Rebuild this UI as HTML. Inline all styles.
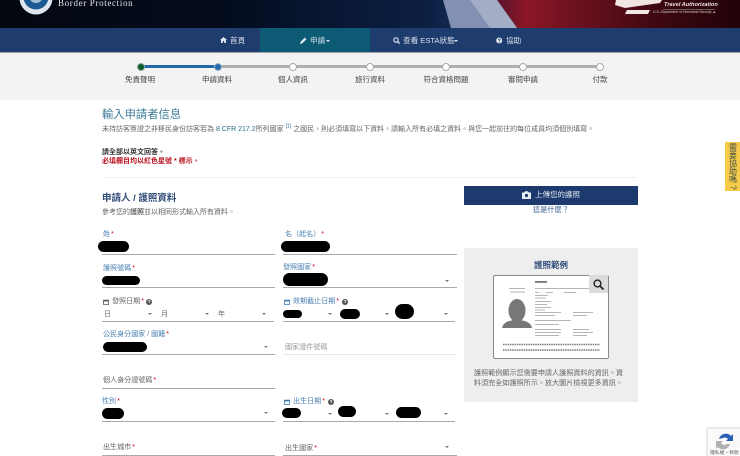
<!DOCTYPE html>
<html lang="zh-Hant"><head><meta charset="utf-8"><title>ESTA</title>
<style>
html,body{margin:0;padding:0;background:#fff}
body{width:740px;height:456px;overflow:hidden;position:relative;font-family:"Liberation Sans","Noto Sans CJK TC",sans-serif;font-size:7.05px;color:#555}
#w{position:absolute;left:0;top:0;width:740px;height:456px;overflow:hidden;filter:blur(.35px)}
#w div,#w svg{position:absolute}
.t{white-space:nowrap;line-height:10px;height:10px}
.c{transform:translateX(-50%)}
.b{background:#000;border-radius:7px}
.u{height:1px;background:#a9a9a9}
.l{color:#4a7fb0}
.g{color:#666}
.r{color:#d0021b;margin-left:1px}
.a{width:0;height:0;border-left:2px solid transparent;border-right:2px solid transparent;border-top:2.5px solid #777}
.s{color:#444;font-size:7.5px}
.d{width:6px;height:6px;border-radius:50%;background:#fff;border:1.5px solid #aaa;top:62.5px}
.nv{color:#d8e0ea;font-size:7.6px}
</style></head><body><div id="w">

<!-- header -->
<div style="left:0;top:0;width:740px;height:28px;background:linear-gradient(90deg,#03070f 0,#040c1e 30%,#0c2044 58%,#13284e 61%,#4a1530 66%,#8a1626 71%,#64101c 80%,#3a0710 90%,#220308 100%)"></div>
<svg style="left:0;top:0" width="740" height="28" viewBox="0 0 740 28">
<polygon points="443,0 497,0 517,28 451,28" fill="#8290b4"/>
<polygon points="470,0 497,0 517,28 490,28" fill="#a4adc6"/>
<circle cx="36" cy="-2" r="16.500" fill="#dfe6ee"/><circle cx="36" cy="-3" r="12.500" fill="#1c5a94"/><circle cx="36" cy="-4" r="7" fill="#9fc0d4"/>
<polygon points="616,0 662,0 660,3 625,8 615,5" fill="#efe6e4"/>
<polygon points="627,10 650,10 648,14 625,14" fill="#f2e8e6"/>
</svg>
<div class="t" style="left:58px;top:-2px;color:#e4e8ee;font:9px/10px 'Liberation Serif',serif;letter-spacing:.65px">Border Protection</div>
<div class="t" style="left:664px;top:0;color:#e8e0e0;font:italic bold 5.6px/10px 'Liberation Sans',sans-serif">Travel Authorization</div>
<div class="t" style="left:653px;top:8px;color:#d8d0d0;font:italic 3.4px/9px 'Liberation Sans',sans-serif">U.S. Department of Homeland Security &#9650;</div>
<div style="left:663px;top:9px;width:52px;height:1px;background:#bda;opacity:.4"></div>

<!-- nav -->
<div style="left:0;top:28px;width:740px;height:24px;background:#1f3c6f"></div>
<div style="left:260px;top:28px;width:110px;height:24px;background:#0d5a74"></div>
<div style="left:0;top:52px;width:740px;height:1px;background:#9aa0a8"></div>
<svg style="left:220px;top:37px" width="7" height="6" viewBox="0 0 7 6"><path d="M3.5 0L7 3H6V6H4.200V4H2.800V6H1V3H0Z" fill="#dfe6ef"/></svg>
<div class="t nv" style="left:230px;top:36px">首頁</div>
<svg style="left:300px;top:37px" width="7" height="7" viewBox="0 0 7 7"><path d="M0 7L.6 4.800 4.800.6 6.400 2.200 2.200 6.400Z" fill="#e6ecf2"/></svg>
<div class="t nv" style="left:310px;top:36px">申請</div>
<div style="left:326px;top:40px;border-left:2px solid transparent;border-right:2px solid transparent;border-top:2px solid #e6ecf2;width:0;height:0"></div>
<svg style="left:393px;top:37px" width="7" height="7" viewBox="0 0 7 7"><circle cx="3" cy="3" r="2.200" fill="none" stroke="#e6ecf2" stroke-width="1.100"/><path d="M4.600 4.600L6.600 6.600" stroke="#e6ecf2" stroke-width="1.200"/></svg>
<div class="t nv" style="left:403px;top:36px">查看 ESTA狀態</div>
<div style="left:454px;top:40px;border-left:2px solid transparent;border-right:2px solid transparent;border-top:2px solid #e6ecf2;width:0;height:0"></div>
<svg style="left:496px;top:37px" width="7" height="7" viewBox="0 0 7 7"><circle cx="3.200" cy="3.500" r="3" fill="#e6ecf2"/><path d="M2.200 2.800C2.400 1.700 4.200 1.800 4.200 2.900 4.200 3.600 3.200 3.600 3.200 4.400" stroke="#1f3c6f" stroke-width=".8" fill="none"/><circle cx="3.200" cy="5.400" r=".5" fill="#1f3c6f"/></svg>
<div class="t nv" style="left:506px;top:36px">協助</div>

<!-- progress -->
<div style="left:0;top:53px;width:740px;height:47px;background:#f3f3f3"></div>
<div style="left:140px;top:65px;width:460px;height:3px;background:#b0b0b0"></div>
<div style="left:140px;top:65px;width:77px;height:3px;background:#2467a8"></div>
<div style="left:137px;top:63px;width:6px;height:6px;border-radius:50%;background:#0f5c2a;border:.5px solid #8aa"></div>
<div style="left:214px;top:63px;width:6px;height:6px;border-radius:50%;background:#2467a8;border:.5px solid #9bc"></div>
<div class="d" style="left:289px"></div><div class="d" style="left:366px"></div><div class="d" style="left:442px"></div><div class="d" style="left:519px"></div><div class="d" style="left:596px"></div>
<div class="t c s" style="left:140px;top:75px">免責聲明</div>
<div class="t c s" style="left:217px;top:75px">申請資料</div>
<div class="t c s" style="left:293px;top:75px">個人資訊</div>
<div class="t c s" style="left:370px;top:75px">旅行資料</div>
<div class="t c s" style="left:446px;top:75px">符合資格問題</div>
<div class="t c s" style="left:523px;top:75px">審閱申請</div>
<div class="t c s" style="left:600px;top:75px">付款</div>

<!-- intro -->
<div class="t" style="left:102px;top:109px;font-size:11.3px;line-height:12px;height:12px;color:#3c7c98">輸入申請者信息</div>
<div class="t" style="left:102px;top:125px;color:#666;font-size:7px">未持訪客簽證之非移民身份訪客若為 <span style="color:#2a6d8e">8 CFR 217.2</span>所列國家 <sup style="font-size:5px;line-height:0;color:#2a6d8e">[1]</sup> 之國民，則必須填寫以下資料。請輸入所有必填之資料。與您一起前往的每位成員均須個別填寫。</div>
<div class="t" style="left:102px;top:148px;color:#333;font-weight:bold;font-size:7px">請全部以英文回答。</div>
<div class="t" style="left:102px;top:157px;font-size:7px;font-weight:bold;color:#b8101e">必填欄目均以紅色星號 * 標示。</div>
<div style="left:102px;top:177px;width:535px;height:1px;background:#f0f0f0"></div>
<div class="t" style="left:102px;top:193px;font-size:9.5px;line-height:12px;height:12px;font-weight:bold;color:#2f4a78">申請人 / 護照資料</div>
<div class="t" style="left:102px;top:208px;color:#666;font-size:7px">參考您的<b>護照</b>並以相同形式輸入所有資料。</div>

<!-- row 1 -->
<div class="t l" style="left:103px;top:230px">姓<span class="r">*</span></div>
<div class="b" style="left:98px;top:241px;width:31px;height:11px"></div>
<div class="u" style="left:102px;top:254px;width:173px"></div>
<div class="t l" style="left:285px;top:230px">名（起名）<span class="r">*</span></div>
<div class="b" style="left:281px;top:241px;width:49px;height:11px"></div>
<div class="u" style="left:283px;top:254px;width:174px"></div>

<!-- row 2 -->
<div class="t l" style="left:103px;top:264px">護照號碼<span class="r">*</span></div>
<div class="b" style="left:102px;top:276px;width:38px;height:9px"></div>
<div class="u" style="left:102px;top:287px;width:173px"></div>
<div class="t l" style="left:283px;top:263px">發照國家<span class="r">*</span></div>
<div class="b" style="left:283px;top:273px;width:45px;height:13px"></div>
<div class="a" style="left:445px;top:280px"></div>
<div class="u" style="left:283px;top:287px;width:174px"></div>

<!-- row 3 -->
<svg style="left:103px;top:299px" width="6" height="6" viewBox="0 0 6 6"><path d="M.5 1.200H5.500V5.500H.5Z" fill="none" stroke="#555" stroke-width=".8"/><path d="M.5 1.200H5.500V2.400H.5Z" fill="#555"/></svg>
<div class="t g" style="left:112px;top:297px">發照日期<span class="r">*</span></div>
<svg style="left:146px;top:299px" width="6" height="6" viewBox="0 0 6 6"><circle cx="3" cy="3" r="3" fill="#555"/><path d="M2 2.300C2.200 1.300 3.900 1.400 3.900 2.400 3.900 3 3 3 3 3.800" stroke="#fff" stroke-width=".7" fill="none"/></svg>
<div class="t g" style="left:104px;top:310px">日</div><div class="a" style="left:148px;top:313px"></div>
<div class="t g" style="left:161px;top:310px">月</div><div class="a" style="left:205px;top:313px"></div>
<div class="t g" style="left:218px;top:310px">年</div><div class="a" style="left:262px;top:313px"></div>
<div class="u" style="left:102px;top:321px;width:172px"></div>

<svg style="left:284px;top:299px" width="6" height="6" viewBox="0 0 6 6"><path d="M.5 1.200H5.500V5.500H.5Z" fill="none" stroke="#3b78b0" stroke-width=".8"/><path d="M.5 1.200H5.500V2.400H.5Z" fill="#3b78b0"/></svg>
<div class="t l" style="left:293px;top:297px">效期截止日期<span class="r">*</span></div>
<svg style="left:342px;top:299px" width="6" height="6" viewBox="0 0 6 6"><circle cx="3" cy="3" r="3" fill="#555"/><path d="M2 2.300C2.200 1.300 3.900 1.400 3.900 2.400 3.900 3 3 3 3 3.800" stroke="#fff" stroke-width=".7" fill="none"/></svg>
<div class="b" style="left:283px;top:310px;width:19px;height:8px"></div><div class="a" style="left:328px;top:313px"></div>
<div class="b" style="left:340px;top:309px;width:20px;height:10px"></div><div class="a" style="left:385px;top:313px"></div>
<div class="b" style="left:395px;top:304px;width:19px;height:15px;border-radius:8px"></div><div class="a" style="left:444px;top:313px"></div>
<div class="u" style="left:283px;top:321px;width:172px"></div>

<!-- row 4 -->
<div class="t l" style="left:103px;top:330px">公民身分國家 / 國籍<span class="r">*</span></div>
<div class="b" style="left:103px;top:342px;width:44px;height:10px"></div>
<div class="a" style="left:264px;top:346px"></div>
<div class="u" style="left:102px;top:354px;width:173px"></div>
<div class="t" style="left:285px;top:343px;color:#999">國家證件號碼</div>
<div class="u" style="left:283px;top:354px;width:174px;background:#e8e8e8"></div>

<!-- row 5 -->
<div class="t g" style="left:103px;top:376px">個人身分證號碼<span class="r">*</span></div>
<div class="u" style="left:102px;top:388px;width:173px"></div>

<!-- row 6 -->
<div class="t l" style="left:102px;top:397px">性別<span class="r">*</span></div>
<div class="b" style="left:102px;top:408px;width:22px;height:11px"></div>
<div class="a" style="left:264px;top:412px"></div>
<div class="u" style="left:102px;top:421px;width:173px"></div>
<svg style="left:284px;top:399px" width="6" height="6" viewBox="0 0 6 6"><path d="M.5 1.200H5.500V5.500H.5Z" fill="none" stroke="#3b78b0" stroke-width=".8"/><path d="M.5 1.200H5.500V2.400H.5Z" fill="#3b78b0"/></svg>
<div class="t l" style="left:293px;top:397px">出生日期<span class="r">*</span></div>
<svg style="left:328px;top:399px" width="6" height="6" viewBox="0 0 6 6"><circle cx="3" cy="3" r="3" fill="#555"/><path d="M2 2.300C2.200 1.300 3.900 1.400 3.900 2.400 3.900 3 3 3 3 3.800" stroke="#fff" stroke-width=".7" fill="none"/></svg>
<div class="b" style="left:282px;top:408px;width:19px;height:10px"></div><div class="a" style="left:328px;top:413px"></div>
<div class="b" style="left:338px;top:406px;width:18px;height:11px"></div><div class="a" style="left:385px;top:413px"></div>
<div class="b" style="left:396px;top:407px;width:25px;height:11px"></div><div class="a" style="left:444px;top:413px"></div>
<div class="u" style="left:283px;top:421px;width:172px"></div>

<!-- row 7 -->
<div class="t g" style="left:103px;top:443px">出生城市<span class="r">*</span></div>
<div class="u" style="left:102px;top:455px;width:173px"></div>
<div class="t g" style="left:285px;top:444px">出生國家<span class="r">*</span></div>
<div class="a" style="left:445px;top:446px"></div>
<div class="u" style="left:283px;top:455px;width:174px"></div>

<!-- right column -->
<div style="left:464px;top:186px;width:174px;height:19px;background:#1c3a6e"></div>
<svg style="left:522px;top:191px" width="9" height="8" viewBox="0 0 9 8"><path d="M0 1.500H2.200L3 .3H6L6.800 1.500H9V8H0Z" fill="#e8edf3"/><circle cx="4.500" cy="4.500" r="1.600" fill="#1c3a6e"/></svg>
<div class="t" style="left:535px;top:190px;color:#dfe6ef;font-size:7.500px">上傳您的護照</div>
<div class="t c" style="left:551px;top:205px;color:#2f5a8c;font-size:7.2px">這是什麼？</div>

<div style="left:464px;top:248px;width:174px;height:154px;background:#eeeeee"></div>
<div class="t c" style="left:551px;top:260px;color:#2f4a78;font-weight:bold;font-size:8.5px">護照範例</div>
<div style="left:493px;top:275px;width:114px;height:82px;background:#fff;border:1px solid #8a8a8a;border-radius:2px"></div>
<svg style="left:494px;top:276px" width="114" height="82" viewBox="0 0 114 82">
<ellipse cx="23" cy="34.500" rx="8.500" ry="11.500" fill="#777"/>
<path d="M8 52C9 46 16 44 23 44 30 44 37 46 38 52Z" fill="#777"/>
<g fill="#b5b5b5"><rect x="15" y="12" width="16" height="1"/><rect x="16" y="15.500" width="15" height="1"/>
<rect x="41" y="5" width="12" height="1.800" fill="#777"/>
<rect x="41" y="12" width="56" height="1"/><rect x="41" y="16" width="4" height="1"/><rect x="52" y="16" width="7" height="1"/><rect x="70" y="16" width="12" height="1"/>
<rect x="41" y="19" width="13" height="1"/><rect x="41" y="21.500" width="11" height="1"/><rect x="41" y="25" width="16" height="1"/><rect x="41" y="28" width="12" height="1"/><rect x="41" y="31" width="16" height="1"/><rect x="41" y="33.500" width="10" height="1"/>
<rect x="41" y="36" width="26" height="1"/><rect x="79" y="36" width="20" height="1"/><rect x="41" y="39" width="20" height="1"/><rect x="79" y="39" width="14" height="1"/>
<rect x="41" y="44" width="36" height="1"/><rect x="41" y="48" width="24" height="1"/>
<rect x="41" y="53" width="26" height="1"/><rect x="41" y="56" width="26" height="1"/><rect x="41" y="59" width="24" height="1"/><rect x="79" y="53" width="16" height="1"/><rect x="79" y="56" width="20" height="1"/><rect x="79" y="59" width="14" height="1"/>
</g>
<path d="M9 68.500H106M9 74H106" stroke="#777" stroke-width="1.400" stroke-dasharray="1.500 .8" fill="none"/>
</svg>
<div style="left:589px;top:275px;width:19px;height:18px;background:#dcdcdc"></div>
<svg style="left:593px;top:279px" width="11" height="11" viewBox="0 0 11 11"><circle cx="4.500" cy="4.500" r="3.400" fill="none" stroke="#222" stroke-width="1.400"/><path d="M7 7L10.500 10.500" stroke="#222" stroke-width="1.800"/></svg>
<div class="t" style="left:474px;top:368px;color:#666;font-size:7.100px">護照範例顯示您需要申請人護照資料的資訊。資</div>
<div class="t" style="left:474px;top:378px;color:#666;font-size:7.100px">料須完全如護照所示。放大圖片檢視更多資訊。</div>

<!-- side tab -->
<div style="left:725px;top:142px;width:15px;height:49px;background:#f6cb4a"></div>
<div style="left:727.500px;top:143px;width:10px;writing-mode:vertical-rl;color:#3f4f48;font-size:8px;line-height:10px;white-space:nowrap">需要協助嗎 ?</div>

<!-- recaptcha -->
<div style="left:707px;top:428px;width:33px;height:28px;background:#fafafa;border:1px solid #e6e6e6;box-shadow:0 0 2px #ccc;border-right:0;border-bottom:0"></div>
<svg style="left:714px;top:432px" width="20" height="18" viewBox="0 0 20 18"><path d="M5 7A7 7 0 0 1 17 4L19 2V9H12L14 7A4 4 0 0 0 9 6Z" fill="#2a5fb8"/><path d="M2 9H9L7 11A4 4 0 0 0 13 12L16 12A7 7 0 0 1 4 15L2 17Z" fill="#b0b0b0"/></svg>
<div class="t" style="left:710px;top:450px;font-size:4.800px;color:#666;line-height:7px;height:7px">隱私權・條款</div>
</div></body></html>
